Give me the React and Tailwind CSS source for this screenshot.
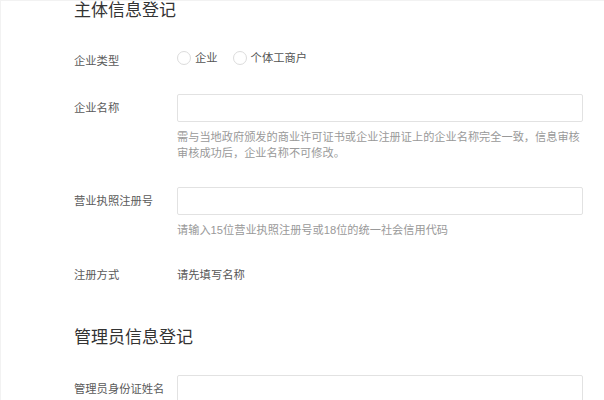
import React from 'react';

const font = { fontFamily: '"Liberation Sans", "Noto Sans CJK SC", sans-serif' };

function Label({ children, className = '' }) {
  return <div className={`w-[103px] shrink-0 text-[11.3px] text-[#5a5a5a] ${className}`}>{children}</div>;
}

function Radio({ label }) {
  return (
    <label className="flex items-center gap-[4px] mr-[15px]">
      <span className="w-[14px] h-[14px] rounded-full border border-[#dcdcdc] bg-white" />
      <span className="text-[11.3px] text-[#555]">{label}</span>
    </label>
  );
}

function TextInput() {
  return (
    <input
      type="text"
      className="w-[406px] h-[28px] border border-[#e2e2e2] rounded-[2px] bg-white outline-none px-2 text-[12px]"
    />
  );
}

export default function App() {
  return (
    <div className="min-h-screen bg-white border-t border-l border-[#f2f2f2] overflow-hidden" style={font}>
      <div className="pl-[73px]">
        <h2 className="text-[17px] leading-[22px] text-[#333] -mt-px">主体信息登记</h2>

        <div className="mt-[26px] flex items-center h-[20px]">
          <Label className="pt-[6px]">企业类型</Label>
          <div className="flex items-center">
            <Radio label="企业" />
            <Radio label="个体工商户" />
          </div>
        </div>

        <div className="mt-[26px] flex items-center">
          <Label>企业名称</Label>
          <TextInput />
        </div>
        <p className="mt-[7px] ml-[103px] w-[408px] text-[11.2px] leading-4 text-[#999]">
          需与当地政府颁发的商业许可证书或企业注册证上的企业名称完全一致，信息审核审核成功后，企业名称不可修改。
        </p>

        <div className="mt-[26px] flex items-center">
          <Label>营业执照注册号</Label>
          <TextInput />
        </div>
        <p className="mt-[7px] ml-[103px] text-[11.2px] leading-4 text-[#999]">
          请输入15位营业执照注册号或18位的统一社会信用代码
        </p>

        <div className="mt-[27px] flex items-center h-[20px]">
          <Label>注册方式</Label>
          <span className="text-[11.3px] text-[#555]">请先填写名称</span>
        </div>

        <h2 className="mt-[42px] text-[17px] leading-[22px] text-[#333]">管理员信息登记</h2>

        <div className="mt-[26px] flex items-center">
          <Label>管理员身份证姓名</Label>
          <TextInput />
        </div>
      </div>
    </div>
  );
}
